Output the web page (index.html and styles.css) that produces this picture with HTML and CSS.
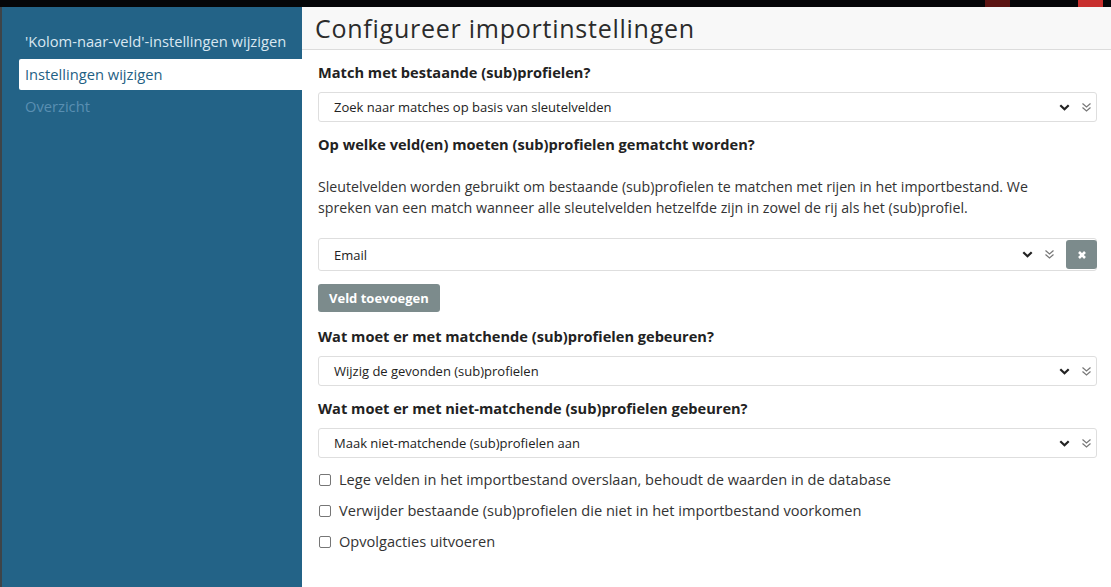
FILE: index.html
```html
<!DOCTYPE html>
<html lang="nl">
<head>
<meta charset="utf-8">
<title>Configureer importinstellingen</title>
<link rel="stylesheet" href="styles.css">
</head>
<body>
<div class="topbar">
  <span class="tb-btn tb-dark"></span>
  <span class="tb-btn tb-red"></span>
</div>
<div class="app">
  <div class="edge"></div>
  <nav class="sidebar">
    <a class="nav-item">'Kolom-naar-veld'-instellingen wijzigen</a>
    <a class="nav-item active">Instellingen wijzigen</a>
    <a class="nav-item muted">Overzicht</a>
  </nav>
  <main class="main">
    <header class="header"><h1>Configureer importinstellingen</h1></header>
    <div class="content">
      <label class="label">Match met bestaande (sub)profielen?</label>
      <div class="select">
        <span class="select-text">Zoek naar matches op basis van sleutelvelden</span>
        <span class="icons">
          <svg class="chev" width="11" height="7" viewBox="0 0 11 7"><path d="M1.3 1.2 L5.5 5.3 L9.7 1.2" fill="none" stroke="#222" stroke-width="2.2"/></svg>
          <svg class="dchev" width="11" height="11" viewBox="0 0 11 11"><path d="M1.5 1.5 L5.5 5 L9.5 1.5 M1.5 5.5 L5.5 9 L9.5 5.5" fill="none" stroke="#777" stroke-width="1.2"/></svg>
        </span>
      </div>

      <label class="label">Op welke veld(en) moeten (sub)profielen gematcht worden?</label>
      <p class="help">Sleutelvelden worden gebruikt om bestaande (sub)profielen te matchen met rijen in het importbestand. We spreken van een match wanneer alle sleutelvelden hetzelfde zijn in zowel de rij als het (sub)profiel.</p>
      <div class="select select-tall">
        <span class="select-text">Email</span>
        <span class="icons">
          <svg class="chev" width="11" height="7" viewBox="0 0 11 7"><path d="M1.3 1.2 L5.5 5.3 L9.7 1.2" fill="none" stroke="#222" stroke-width="2.2"/></svg>
          <svg class="dchev" width="11" height="11" viewBox="0 0 11 11"><path d="M1.5 1.5 L5.5 5 L9.5 1.5 M1.5 5.5 L5.5 9 L9.5 5.5" fill="none" stroke="#777" stroke-width="1.2"/></svg>
          <span class="remove"><svg width="10" height="10" viewBox="0 0 10 10"><path d="M2 2 L8 8 M8 2 L2 8" stroke="#fff" stroke-width="2.6"/></svg></span>
        </span>
      </div>
      <button class="btn">Veld toevoegen</button>

      <label class="label">Wat moet er met matchende (sub)profielen gebeuren?</label>
      <div class="select">
        <span class="select-text">Wijzig de gevonden (sub)profielen</span>
        <span class="icons">
          <svg class="chev" width="11" height="7" viewBox="0 0 11 7"><path d="M1.3 1.2 L5.5 5.3 L9.7 1.2" fill="none" stroke="#222" stroke-width="2.2"/></svg>
          <svg class="dchev" width="11" height="11" viewBox="0 0 11 11"><path d="M1.5 1.5 L5.5 5 L9.5 1.5 M1.5 5.5 L5.5 9 L9.5 5.5" fill="none" stroke="#777" stroke-width="1.2"/></svg>
        </span>
      </div>

      <label class="label">Wat moet er met niet-matchende (sub)profielen gebeuren?</label>
      <div class="select">
        <span class="select-text">Maak niet-matchende (sub)profielen aan</span>
        <span class="icons">
          <svg class="chev" width="11" height="7" viewBox="0 0 11 7"><path d="M1.3 1.2 L5.5 5.3 L9.7 1.2" fill="none" stroke="#222" stroke-width="2.2"/></svg>
          <svg class="dchev" width="11" height="11" viewBox="0 0 11 11"><path d="M1.5 1.5 L5.5 5 L9.5 1.5 M1.5 5.5 L5.5 9 L9.5 5.5" fill="none" stroke="#777" stroke-width="1.2"/></svg>
        </span>
      </div>

      <div class="checks">
        <label class="check"><span class="box"></span>Lege velden in het importbestand overslaan, behoudt de waarden in de database</label>
        <label class="check"><span class="box"></span>Verwijder bestaande (sub)profielen die niet in het importbestand voorkomen</label>
        <label class="check"><span class="box"></span>Opvolgacties uitvoeren</label>
      </div>
    </div>
  </main>
</div>
</body>
</html>
```

FILE: styles.css
```css
* { box-sizing: border-box; }
html, body { margin: 0; padding: 0; }
body {
  width: 1111px;
  height: 587px;
  overflow: hidden;
  font-family: "Open Sans", "Liberation Sans", sans-serif;
  color: #333;
  background: #fff;
}
.topbar {
  height: 7px;
  background: #050608;
  display: flex;
}
.tb-btn { height: 7px; display: block; }
.tb-dark { width: 25px; background: #5c1412; margin-left: 985px; }
.tb-red { width: 25px; background: #c8302e; margin-left: 68px; }

.app {
  display: flex;
  height: 580px;
}
.edge { width: 2px; background: #3e4448; }
.sidebar {
  width: 300px;
  background: #236387;
  padding-top: 19px;
  padding-left: 17px;
  display: flex;
  flex-direction: column;
  gap: 1px;
}
.nav-item {
  display: block;
  height: 32px;
  line-height: 31px;
  padding-left: 6px;
  font-size: 14.7px;
  color: #d9e7f1;
  border-radius: 2px 0 0 2px;
}
.nav-item.active { background: #fff; color: #1f5f84; height: 31px; }
.nav-item.muted { color: #5a8fb2; }

.main {
  flex: 1;
  display: flex;
  flex-direction: column;
  background: #fff;
}
.header {
  height: 43px;
  background: #f8f8f8;
  border-bottom: 1px solid #dcdcdc;
  padding-left: 13px;
}
.header h1 {
  margin: 0;
  font-weight: 400;
  font-size: 25px;
  line-height: 43px;
  letter-spacing: 0.75px;
  color: #2b2b2b;
}
.content {
  padding: 12px 14px 0 16px;
  display: flex;
  flex-direction: column;
}
.label {
  display: block;
  font-weight: 700;
  font-size: 14.6px;
  line-height: 20px;
  color: #222;
  margin-bottom: 10px;
}
.select {
  position: relative;
  height: 30px;
  border: 1px solid #dedede;
  border-radius: 3px;
  display: flex;
  align-items: center;
  padding-left: 15px;
  margin-bottom: 12px;
}
.select-tall { height: 33px; margin-bottom: 13px; }
.select-text { font-size: 13px; color: #222; flex: 1; }
.icons {
  display: flex;
  align-items: center;
  height: 100%;
}
.chev { margin-right: 11px; }
.dchev { margin-right: 4px; }
.remove {
  width: 31px;
  height: 29px;
  background: #7c8b8c;
  border-radius: 3px;
  display: flex;
  align-items: center;
  justify-content: center;
  margin-left: 7px;
  margin-right: -1px;
}
.help {
  margin: 12px 0 20px;
  padding-right: 30px;
  font-size: 14.2px;
  line-height: 21px;
  color: #333;
}
.btn {
  align-self: flex-start;
  font-family: inherit;
  font-weight: 700;
  font-size: 13px;
  color: #fff;
  background: #7c8b8c;
  border: 0;
  border-radius: 3px;
  height: 28px;
  padding: 0 11px;
  margin-bottom: 14px;
}
.checks {
  display: flex;
  flex-direction: column;
  gap: 10px;
  margin-top: -1px;
}
.check {
  display: flex;
  align-items: center;
  font-size: 14.6px;
  line-height: 21px;
  color: #333;
}
.box {
  width: 12px;
  height: 12px;
  border: 1px solid #767676;
  border-radius: 2px;
  margin-left: 1px;
  margin-right: 8px;
  background: #fff;
}
```
